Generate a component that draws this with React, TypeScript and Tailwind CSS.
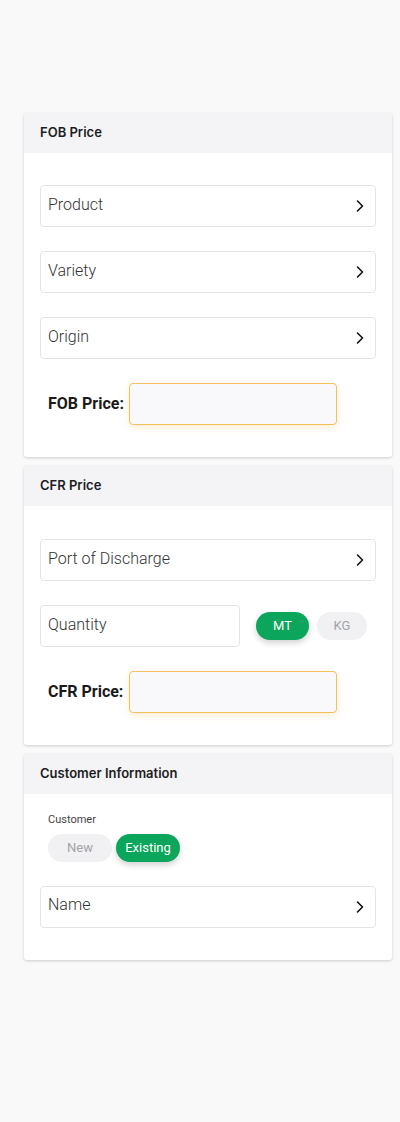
import React from "react";

const Chevron = () => (
  <svg width="10" height="14" viewBox="0 0 10 14" fill="none" className="shrink-0">
    <path d="M2.5 2 L7.5 7 L2.5 12" stroke="#111" strokeWidth="1.6" strokeLinecap="round" strokeLinejoin="round" />
  </svg>
);

const SelectRow = ({ label }: { label: string }) => (
  <div className="flex h-[42px] items-center justify-between rounded-[4px] border border-[#e4e4e7] bg-white pl-[7px] pr-[10px]">
    <span className="pb-[3px] text-[16px] font-light text-[#333] leading-none">{label}</span>
    <Chevron />
  </div>
);

const PriceRow = ({ label }: { label: string }) => (
  <div className="flex items-center pl-2">
    <span className="w-[81px] text-[16px] font-bold text-[#1a1a1a]">{label}</span>
    <div className="h-[42px] w-[208px] rounded-[4px] border border-[#f2c15c] bg-[#f9f9fb] shadow-[0_3px_7px_rgba(240,180,60,0.22)]"></div>
  </div>
);

const Card = ({ title, children, className }: { title: string; children: React.ReactNode; className?: string }) => (
  <div className="overflow-hidden rounded-[3px] bg-white shadow-[0_1px_3px_rgba(0,0,0,0.18)]">
    <div className="flex h-10 items-center bg-[#f4f4f6] px-4">
      <span className="text-[13px] font-semibold text-[#1d1d1f]" style={{ fontFamily: "Inter, sans-serif" }}>{title}</span>
    </div>
    <div className={className}>{children}</div>
  </div>
);

export default function App() {
  return (
    <div className="min-h-[1122px] bg-[#f9f9f9] px-6 pt-[113px]" style={{ fontFamily: "Roboto, 'Noto Sans', sans-serif" }}>
      <div className="flex w-[368px] flex-col gap-[9px]">
        <Card title="FOB Price" className="flex flex-col gap-6 px-4 pt-8 pb-8">
          <SelectRow label="Product" />
          <SelectRow label="Variety" />
          <SelectRow label="Origin" />
          <PriceRow label="FOB Price:" />
        </Card>
        <Card title="CFR Price" className="flex flex-col gap-6 px-4 pt-[33px] pb-8">
          <SelectRow label="Port of Discharge" />
          <div className="flex items-center">
            <div className="flex h-[42px] w-[200px] items-center rounded-[4px] border border-[#e4e4e7] bg-white pl-[7px]">
              <span className="pb-[3px] text-[16px] font-light text-[#333] leading-none">Quantity</span>
            </div>
            <div className="ml-4 flex h-7 w-[53px] items-center justify-center rounded-full bg-[#0ba55b] text-[13px] text-white shadow-[0_3px_6px_rgba(0,0,0,0.18)]">MT</div>
            <div className="ml-2 flex h-7 w-[50px] items-center justify-center rounded-full bg-[#f1f1f3] text-[13px] text-[#a3a3a8]">KG</div>
          </div>
          <PriceRow label="CFR Price:" />
        </Card>
        <Card title="Customer Information" className="flex flex-col px-4 pt-[18px] pb-8">
          <span className="pl-2 text-[11px] text-[#444]">Customer</span>
          <div className="mt-[5px] flex gap-1 pl-2">
            <div className="flex h-7 w-16 items-center justify-center rounded-full bg-[#f1f1f3] text-[13px] text-[#a3a3a8]">New</div>
            <div className="flex h-7 w-16 items-center justify-center rounded-full bg-[#0ba55b] text-[13px] text-white shadow-[0_3px_6px_rgba(0,0,0,0.18)]">Existing</div>
          </div>
          <div className="mt-6">
            <SelectRow label="Name" />
          </div>
        </Card>
      </div>
    </div>
  );
}
